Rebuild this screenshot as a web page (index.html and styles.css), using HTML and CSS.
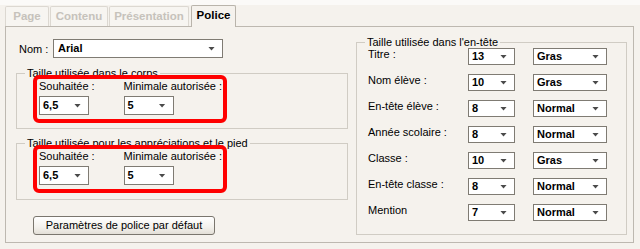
FILE: index.html
```html
<!DOCTYPE html>
<html lang="fr">
<head>
<meta charset="utf-8">
<title>Police</title>
<link rel="stylesheet" href="styles.css">
</head>
<body>
<div class="window">
  <div class="tabs">
    <div class="tab t-page">Page</div>
    <div class="tab t-contenu">Contenu</div>
    <div class="tab t-pres">Présentation</div>
    <div class="tab t-police active">Police</div>
  </div>
  <div class="panel">
    <div class="left">
      <div class="nom-row">
        <span class="nom-lbl">Nom :</span>
        <div class="combo combo-l w-nom">Arial</div>
      </div>
      <fieldset class="group g-corps">
        <legend>Taille utilisée dans le corps</legend>
        <div class="pair">
          <div class="col c1"><span class="lbl">Souhaitée :</span><div class="combo combo-l w-s">6,5</div></div>
          <div class="col"><span class="lbl">Minimale autorisée :</span><div class="combo combo-l w-s">5</div></div>
        </div>
      </fieldset>
      <fieldset class="group g-pied">
        <legend>Taille utilisée pour les appréciations et le pied</legend>
        <div class="pair">
          <div class="col c1"><span class="lbl">Souhaitée :</span><div class="combo combo-l w-s">6,5</div></div>
          <div class="col"><span class="lbl">Minimale autorisée :</span><div class="combo combo-l w-s">5</div></div>
        </div>
      </fieldset>
      <button class="btn" type="button">Paramètres de police par défaut</button>
    </div>
    <fieldset class="group g-entete">
      <legend>Taille utilisée dans l'en-tête</legend>
      <div class="rows">
        <span class="rlbl">Titre :</span><div class="combo combo-r w-n">13</div><div class="combo combo-r w-w">Gras</div>
        <span class="rlbl">Nom élève :</span><div class="combo combo-r w-n">10</div><div class="combo combo-r w-w">Gras</div>
        <span class="rlbl">En-tête élève :</span><div class="combo combo-r w-n">8</div><div class="combo combo-r w-w">Normal</div>
        <span class="rlbl">Année scolaire :</span><div class="combo combo-r w-n">8</div><div class="combo combo-r w-w">Normal</div>
        <span class="rlbl">Classe :</span><div class="combo combo-r w-n">10</div><div class="combo combo-r w-w">Gras</div>
        <span class="rlbl">En-tête classe :</span><div class="combo combo-r w-n">8</div><div class="combo combo-r w-w">Normal</div>
        <span class="rlbl">Mention</span><div class="combo combo-r w-n">7</div><div class="combo combo-r w-w">Normal</div>
      </div>
    </fieldset>
  </div>
</div>
</body>
</html>
```
FILE: styles.css
```css
* { box-sizing: border-box; }
html, body { margin: 0; padding: 0; }
body {
  width: 640px;
  height: 249px;
  overflow: hidden;
  background: linear-gradient(#fbfaf8 0, #fbfaf8 5px, #f5f2ed 5px);
  font-family: "Liberation Sans", Arial, sans-serif;
  font-size: 11px;
  color: #000;
}
.window { padding-top: 5px; }
.tabs {
  display: flex;
  align-items: flex-end;
  height: 21px;
  padding-left: 5px;
  gap: 1px;
}
.tab {
  height: 20px;
  border: 1px solid #dcd8d1;
  border-bottom: none;
  border-radius: 2px 2px 0 0;
  background: #f7f5f1;
  color: #c6c2bb;
  font-weight: bold;
  font-size: 11.5px;
  line-height: 18px;
  text-align: center;
}
.t-page { width: 44px; }
.t-contenu { width: 58px; }
.t-pres { width: 80px; }
.t-police { width: 45px; margin-left: 1px; }
.tab.active {
  position: relative;
  z-index: 1;
  height: 22px;
  margin-bottom: -1px;
  border-color: #b9b4ab;
  background: #f5f2ed;
  color: #000;
  line-height: 19px;
}
.panel {
  display: flex;
  align-items: flex-start;
  margin-left: 5px;
  width: 629px;
  height: 217px;
  border: 1px solid #bdb8b0;
  padding: 0 6px 0 10px;
  gap: 8px;
}
.left {
  display: flex;
  flex-direction: column;
  align-items: flex-start;
  width: 332px;
}
.nom-row {
  display: flex;
  align-items: center;
  margin-top: 12px;
}
.nom-lbl {
  width: 37px;
  padding-left: 3px;
}
.combo {
  position: relative;
  background: #fff;
  border: 1px solid #7f7b73;
  font-weight: bold;
  white-space: nowrap;
}
.combo::after {
  content: "";
  position: absolute;
  right: 7px;
  top: 50%;
  width: 7px;
  height: 4px;
  margin-top: -2px;
  background: #4a4a4a;
  clip-path: polygon(0 0, 100% 0, 50% 100%);
}
.combo-l {
  height: 19px;
  line-height: 17px;
  padding-left: 3px;
}
.w-nom { width: 170px; padding-left: 4px; }
.w-s { width: 50px; }
.group {
  margin: 0;
  border: 1px solid #d0ccc4;
  padding: 0;
  min-width: 0;
}
.group legend {
  margin-left: 8px;
  padding: 0 2px;
  line-height: 13px;
  font-size: 11px;
}
.g-corps { width: 332px; margin-top: 9px; padding-bottom: 13px; }
.g-pied { width: 332px; margin-top: 8px; padding-bottom: 14px; }
.pair {
  position: relative;
  display: flex;
  width: 183px;
  margin-left: 22px;
}
.pair::after {
  content: "";
  position: absolute;
  top: -5px;
  left: -6px;
  right: -5px;
  bottom: -8px;
  border: 4px solid #ff0000;
  border-radius: 6px;
}
.col {
  display: flex;
  flex-direction: column;
  align-items: flex-start;
}
.c1 { width: 89px; }
.lbl {
  line-height: 13px;
  margin-bottom: 3px;
  white-space: nowrap;
}
.btn {
  margin: 16px 0 0 17px;
  width: 182px;
  height: 19px;
  padding: 0;
  border: 1px solid #7a766e;
  border-radius: 3px;
  background: linear-gradient(#ffffff, #f3f1ec 60%, #e3dfd7);
  font-family: "Liberation Sans", Arial, sans-serif;
  font-size: 11px;
  color: #000;
  line-height: 17px;
}
.g-entete {
  width: 271px;
  height: 199px;
  margin-top: 9px;
}
.g-entete legend { line-height: 12px; }
.rows {
  display: grid;
  grid-template-columns: 100px 65px 74px;
  grid-auto-rows: 26px;
  align-items: start;
  margin-left: 11px;
}
.rlbl {
  line-height: 13px;
  white-space: nowrap;
}
.combo-r {
  height: 17px;
  line-height: 15px;
  padding-left: 3px;
}
.w-n { width: 47px; }
.w-w { width: 74px; }
```
